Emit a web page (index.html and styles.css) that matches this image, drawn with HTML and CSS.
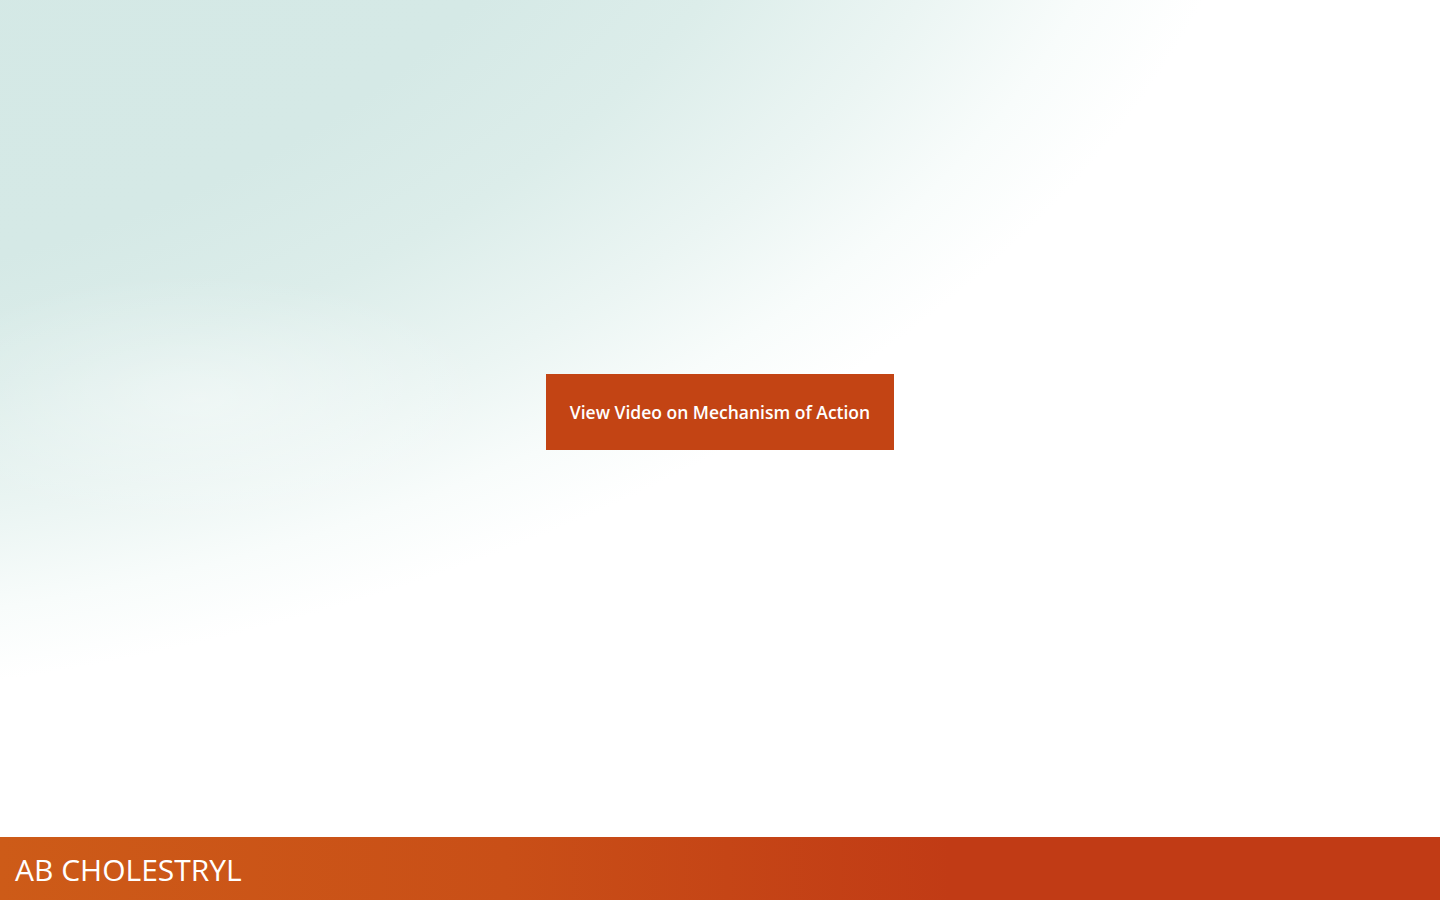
FILE: index.html
```html
<!DOCTYPE html>
<html lang="en">
<head>
<meta charset="utf-8">
<title>AB Cholestryl</title>
<link rel="stylesheet" href="styles.css">
</head>
<body>
<div class="page">
  <main class="stage">
    <a class="cta" href="#">View Video on Mechanism of Action</a>
  </main>
  <footer class="footer">
    <span class="brand">AB CHOLESTRYL</span>
  </footer>
</div>
</body>
</html>
```

FILE: styles.css
```css
html, body {
  margin: 0;
  padding: 0;
  height: 100%;
}
body {
  font-family: "Open Sans", "Liberation Sans", sans-serif;
  background: #ffffff;
}
.page {
  display: flex;
  flex-direction: column;
  height: 900px;
  width: 1440px;
  overflow: hidden;
}
.stage {
  flex: 1;
  display: flex;
  align-items: center;
  justify-content: center;
  padding-bottom: 14px;
  background:
    radial-gradient(ellipse 420px 180px at 200px 400px, rgba(255,255,255,0.4), rgba(255,255,255,0) 70%),
    radial-gradient(ellipse 1680px 1010px at -400px -300px, #d3e8e5 0%, #d5e9e6 60%, #dcedea 72%, #ebf5f3 84%, #f8fcfb 93%, #ffffff 100%);
}
.cta {
  display: flex;
  align-items: center;
  justify-content: center;
  width: 348px;
  height: 76px;
  box-sizing: border-box;
  background: #c34414;
  color: #ffffff;
  font-size: 17.5px;
  font-weight: 600;
  text-decoration: none;
}
.footer {
  height: 63px;
  flex: 0 0 63px;
  display: flex;
  align-items: center;
  padding-left: 15px;
  background: linear-gradient(90deg, #cd5b18 0%, #c94f17 35%, #c13b15 66%, #c13b15 100%);
}
.brand {
  color: #ffffff;
  font-size: 30px;
  font-weight: 400;
  line-height: 1;
  padding-top: 2px;
}
```
